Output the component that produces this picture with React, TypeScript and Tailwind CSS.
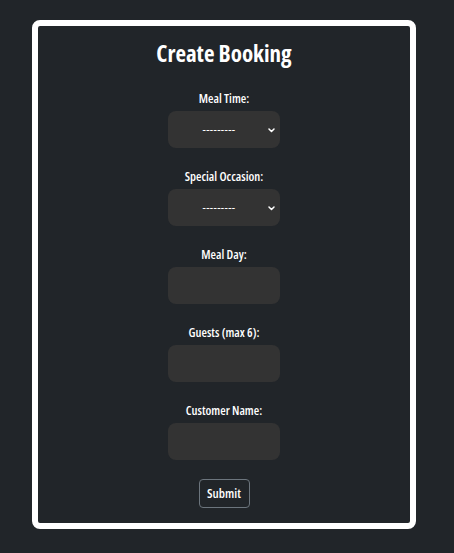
import React from "react";

const font = { fontFamily: '"Open Sans", Roboto, sans-serif', fontStretch: "75%" };

function Chevron() {
  return (
    <svg width="7" height="5" viewBox="0 0 7 5" className="pointer-events-none absolute right-[5px] top-[17px]">
      <path d="M1 1 L3.5 3.5 L6 1" stroke="#ffffff" strokeWidth="1.5" fill="none" strokeLinecap="round" strokeLinejoin="round" />
    </svg>
  );
}

function Field({ label, select }: { label: string; select?: boolean }) {
  return (
    <div className="flex flex-col items-center">
      <label className="text-[12.5px] leading-[16px] text-white font-semibold">{label}</label>
      <div className="relative mt-[4px] h-[37px] w-[112px] rounded-[8px] bg-[#333333]">
        {select && (
          <>
            <div className="flex h-full w-full items-center justify-center pr-[10px] pt-[1px] text-[12px] tracking-[0.4px] text-white">---------</div>
            <Chevron />
          </>
        )}
      </div>
    </div>
  );
}

export default function App() {
  return (
    <div className="min-h-[553px] w-full bg-[#212529] pt-[20px] pb-[24px]" style={font}>
      <div className="ml-[32px] h-[509px] w-[384px] rounded-[8px] border-[6px] border-white bg-[#212529]">
        <div className="flex flex-col items-center pt-[12px]">
          <h1 className="text-[23px] leading-[30px] font-bold text-white">Create Booking</h1>
          <div className="mt-[23px] flex flex-col gap-[21px]">
            <Field label="Meal Time:" select />
            <Field label="Special Occasion:" select />
            <Field label="Meal Day:" />
            <Field label="Guests (max 6):" />
            <Field label="Customer Name:" />
          </div>
          <button className="mt-[19px] h-[29px] w-[51px] rounded-[4px] border border-[#6c757d] text-[13px] font-semibold text-white">
            Submit
          </button>
        </div>
      </div>
    </div>
  );
}
